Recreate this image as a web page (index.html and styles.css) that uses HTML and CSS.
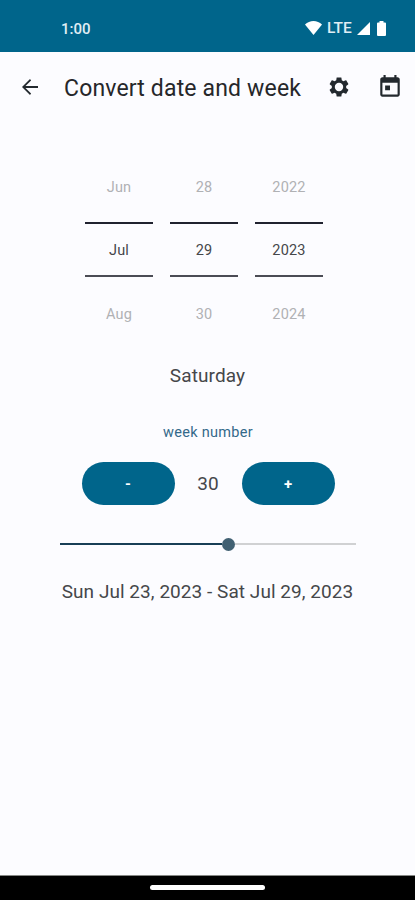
FILE: index.html
```html
<!DOCTYPE html>
<html lang="en">
<head>
    <meta charset="UTF-8">
    <title>Convert date and week</title>
    <link rel="stylesheet" href="styles.css">
</head>
<body>
    <div class="status-bar">
        <span class="clock">1:00</span>
        <svg class="wifi" width="17" height="14" viewBox="0 0 17 14"><path d="M8.5 14L0 3.4C2.400 1.300 5.300 0 8.500 0s6.100 1.300 8.500 3.400z"/></svg>
        <span class="network">LTE</span>
        <svg class="signal" width="13" height="13" viewBox="0 0 13 13"><path d="M13 0v13H0z"/></svg>
        <svg class="battery" width="9" height="15" viewBox="0 0 9 15"><path d="M2.500 0h4v1.600H8q1 0 1 1V14q0 1-1 1H1q-1 0-1-1V2.600q0-1 1-1h1.500z"/></svg>
    </div>

    <div class="toolbar">
        <svg class="back" width="24" height="24" viewBox="0 0 24 24"><path d="M20 11.100H7.500l5.600-5.700L12 4l-8 8 8 8 1.100-1.400-5.600-5.700H20z"/></svg>
        <h1 class="title">Convert date and week</h1>
        <svg class="settings" width="24" height="24" viewBox="0 0 24 24"><path d="M19.140 12.940c.04-.3.06-.61.06-.94 0-.32-.02-.64-.07-.94l2.030-1.580c.18-.14.23-.41.12-.61l-1.920-3.320c-.12-.22-.37-.29-.59-.22l-2.390.96c-.5-.38-1.030-.7-1.620-.94l-.36-2.540c-.04-.24-.24-.41-.48-.41h-3.840c-.24 0-.43.17-.47.41l-.36 2.540c-.59.24-1.130.57-1.620.94l-2.390-.96c-.22-.08-.47 0-.59.22L2.740 8.870c-.12.21-.08.47.12.61l2.030 1.580c-.05.3-.09.63-.09.94s.02.64.07.94l-2.030 1.580c-.18.14-.23.41-.12.61l1.920 3.320c.12.22.37.29.59.22l2.390-.96c.5.38 1.030.7 1.620.94l.36 2.540c.05.24.24.41.48.41h3.840c.24 0 .44-.17.47-.41l.36-2.540c.59-.24 1.130-.56 1.620-.94l2.390.96c.22.08.47 0 .59-.22l1.920-3.320c.12-.22.07-.47-.12-.61l-2.010-1.580zM12 16.200a4.200 4.200 0 1 1 0-8.400 4.200 4.200 0 0 1 0 8.400z"/></svg>
        <svg class="today" width="26" height="26" viewBox="0 0 24 24"><path d="M19 3h-1V1h-2v2H8V1H6v2H5c-1.110 0-2 .9-2 2v14c0 1.100.89 2 2 2h14c1.100 0 2-.9 2-2V5c0-1.100-.9-2-2-2zm0 16H5V8h14v11zM7.500 10.500h4.500v4.500H7.500z"/></svg>
    </div>

    <div class="content">
        <div class="picker">
            <div class="wheel">
                <span class="option">Jun</span>
                <span class="option selected">Jul</span>
                <span class="option">Aug</span>
            </div>
            <div class="wheel">
                <span class="option">28</span>
                <span class="option selected">29</span>
                <span class="option">30</span>
            </div>
            <div class="wheel">
                <span class="option">2022</span>
                <span class="option selected">2023</span>
                <span class="option">2024</span>
            </div>
        </div>

        <div class="weekday">Saturday</div>
        <div class="label">week number</div>

        <div class="stepper">
            <button>-</button>
            <span class="week">30</span>
            <button>+</button>
        </div>

        <div class="slider">
            <div class="filled"></div>
            <div class="thumb"></div>
            <div class="rest"></div>
        </div>

        <div class="range">Sun Jul 23, 2023 - Sat Jul 29, 2023</div>
    </div>

    <div class="nav-bar">
        <div class="handle"></div>
    </div>
</body>
</html>
```
FILE: styles.css
```css
body {
    display: flex;
    flex-direction: column;
    height: 900px;
    margin: 0;
    font-family: Roboto, sans-serif;
    background-color: #fcfcff;
    color: #45474a;
}
svg {
    display: block;
    flex-shrink: 0;
}
.status-bar {
    display: flex;
    align-items: center;
    box-sizing: border-box;
    height: 52px;
    padding: 4px 29px 0 61px;
    background-color: #00658b;
    color: #e0eef5;
    fill: #fff;
}
.clock {
    margin: 1px auto 0 0;
    font-size: 15px;
    font-weight: 500;
}
.network {
    width: 30px;
    margin-left: 5px;
    font-size: 15.500px;
    font-weight: 500;
}
.battery {
    margin-left: 7px;
}
.toolbar {
    display: flex;
    align-items: center;
    height: 70px;
    padding: 0 12px 0 18px;
    fill: #23292e;
}
.title {
    flex: 1;
    margin: 2px 0 0 22px;
    font-size: 23px;
    font-weight: 400;
    letter-spacing: 0.16px;
    white-space: nowrap;
    color: #26272a;
}
.today {
    margin-left: 26px;
}
.content {
    display: flex;
    flex: 1;
    flex-direction: column;
    align-items: center;
}
.picker {
    display: flex;
    gap: 17px;
    margin: 33px 0 0 -8px;
}
.wheel {
    display: flex;
    flex-direction: column;
    align-items: center;
    gap: 1px;
    width: 68px;
}
.option {
    padding-left: 1px;
    font-size: 14.500px;
    line-height: 66px;
    letter-spacing: 0.2px;
    color: #b0b1b4;
}
.selected {
    box-sizing: border-box;
    width: 100%;
    height: 55px;
    margin-bottom: 4px;
    padding-top: 1px;
    border-top: 2px solid #20222f;
    border-bottom: 2px solid #4b4c55;
    line-height: 51px;
    text-align: center;
    color: #45474a;
}
.weekday {
    margin-top: 16px;
    font-size: 19px;
    line-height: 24px;
    letter-spacing: 0.1px;
}
.label {
    margin: 35px 0 0 1px;
    font-size: 14.500px;
    line-height: 20px;
    letter-spacing: 0.3px;
    color: #33698a;
}
.stepper {
    display: flex;
    align-items: center;
    margin: 19px 0 0 1px;
}
.stepper button {
    width: 93px;
    height: 43px;
    padding: 0;
    border: none;
    border-radius: 22px;
    background-color: #00658b;
    color: #fff;
    font-family: inherit;
    font-size: 15px;
    font-weight: 700;
}
.week {
    width: 67px;
    text-align: center;
    font-size: 19px;
}
.slider {
    display: flex;
    align-items: center;
    width: 296px;
    height: 14px;
    margin-top: 32px;
}
.filled {
    width: 162px;
    height: 2px;
    background-color: #183f56;
}
.thumb {
    width: 13px;
    height: 13px;
    border-radius: 50%;
    background-color: #416072;
}
.rest {
    flex: 1;
    height: 2px;
    background-color: #d0d1d3;
}
.range {
    margin-top: 29px;
    font-size: 19px;
    line-height: 24px;
    letter-spacing: 0.05px;
    white-space: nowrap;
}
.nav-bar {
    display: flex;
    justify-content: center;
    align-items: center;
    height: 24px;
    border-top: 1px solid #858784;
    background-color: #000;
}
.handle {
    width: 115px;
    height: 5px;
    margin-bottom: 1px;
    border-radius: 3px;
    background-color: #fff;
}
```
